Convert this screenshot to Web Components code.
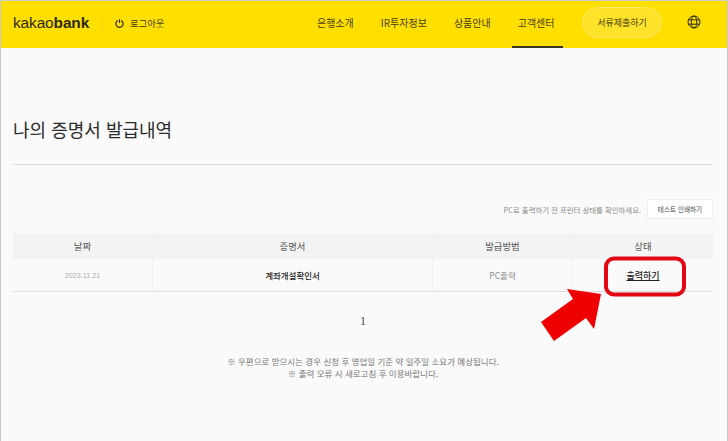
<!DOCTYPE html>
<html lang="ko">
<head>
<meta charset="utf-8">
<title>kakaobank</title>
<style>
    html, body { margin: 0; height: 100%; background: #fafafa; }
    body { font-family: "Noto Sans CJK KR", "Noto Sans", sans-serif; overflow: hidden; }
</style>
</head>
<body>
<cert-page>
    <site-header></site-header>
    <cert-history></cert-history>
</cert-page>
<script>
class CertPage extends HTMLElement {
    constructor() {
        super();
        this.shadowDOM = this.attachShadow({mode: "open"});
        this.shadowDOM.innerHTML = `
        <style>
            :host {
                display: block;
                position: relative;
                box-sizing: border-box;
                width: 728px;
                height: 441px;
                overflow: hidden;
                background: #fafafa;
                border: 1px solid #c9c9c9;
                border-bottom: 0;
            }
        </style>
        <slot></slot>`;
    }
}

class SiteHeader extends HTMLElement {
    constructor() {
        super();
        this.shadowDOM = this.attachShadow({mode: "open"});
        this.shadowDOM.innerHTML = `
        <style>
            :host {
                display: flex;
                align-items: center;
                box-sizing: border-box;
                height: 47px;
                padding: 0 26px 0 12px;
                background: #ffdf00;
                color: #4a4118;
                font-size: 10px;
            }
            .logo {
                font: 400 15.4px "Liberation Sans", sans-serif;
                letter-spacing: -.1px;
                color: #2e2a12;
                padding-bottom: 3px;
            }
            .logo b { font-weight: 700; }
            .sep {
                width: 1px;
                height: 12px;
                margin: 0 12px 0 13px;
                background: #ecd008;
            }
            .logout {
                display: flex;
                align-items: center;
                gap: 6px;
                padding-bottom: 3px;
                font-size: 9.3px;
            }
            nav {
                display: flex;
                align-items: center;
                margin-left: auto;
                height: 100%;
            }
            nav a {
                position: relative;
                display: flex;
                align-items: center;
                height: 100%;
                padding-bottom: 5px;
                box-sizing: border-box;
                margin-right: 27px;
            }
            nav a.on { margin-right: 27.5px; }
            nav a.on::after {
                content: "";
                position: absolute;
                left: -6px;
                right: -8px;
                bottom: 0;
                height: 2px;
                background: #3a3520;
            }
            .submit {
                display: flex;
                align-items: center;
                justify-content: center;
                box-sizing: border-box;
                width: 80px;
                height: 31px;
                margin: 0 25px 5px 0;
                border: 1px solid #ffe75a;
                border-radius: 16px;
                background: #ffe22a;
                font-size: 9px;
            }
            svg { display: block; }
            .globe { margin-bottom: 5px; }
        </style>
        <span class="logo">kakao<b>bank</b></span>
        <span class="sep"></span>
        <span class="logout">
            <svg width="9" height="9" viewBox="0 0 10 10" fill="none" stroke="#2e2a12" stroke-width="1.3">
                <path d="M3 1.8a4 4 0 1 0 4 0"/>
                <path d="M5 .3v4.2"/>
            </svg>
            로그아웃
        </span>
        <nav>
            <a>은행소개</a>
            <a>IR투자정보</a>
            <a>상품안내</a>
            <a class="on">고객센터</a>
            <span class="submit">서류제출하기</span>
            <svg class="globe" width="14" height="14" viewBox="0 0 14 14" fill="none" stroke="#2e2a12" stroke-width="1">
                <circle cx="7" cy="7" r="6"/>
                <ellipse cx="7" cy="7" rx="2.8" ry="6"/>
                <path d="M1.5 4.8h11M1.5 9.2h11"/>
            </svg>
        </nav>`;
    }
}

class CertHistory extends HTMLElement {
    constructor() {
        super();
        this.shadowDOM = this.attachShadow({mode: "open"});
        this.shadowDOM.innerHTML = `
        <style>
            :host {
                display: block;
                padding: 0 14px 0 12px;
                color: #333;
            }
            h1 {
                margin: 0;
                padding: 66px 0 20px;
                font-size: 18px;
                line-height: 30px;
                font-weight: 400;
                color: #2b2b2b;
                border-bottom: 1px solid #dcdcdc;
            }
            .tools {
                display: flex;
                align-items: center;
                justify-content: flex-end;
                gap: 6px;
                height: 20px;
                margin: 34px 0 14px;
                font-size: 7.4px;
                color: #8a8a8a;
            }
            .tools button {
                width: 66px;
                height: 20px;
                padding: 0;
                border: 1px solid #eee;
                background: #fff;
                font: 6.6px "Noto Sans CJK KR", sans-serif;
                color: #444;
            }
            .grid {
                display: grid;
                grid-template-columns: 139px 280px 140px 141px;
                font-size: 8.5px;
                text-align: center;
                border-bottom: 1px solid #ddd;
            }
            .grid > div {
                display: flex;
                align-items: center;
                justify-content: center;
                box-sizing: border-box;
                border-left: 1px solid #f0f0f0;
            }
            .grid > div:nth-child(4n+1) { border-left: 0; }
            .th {
                height: 26px;
                background: #f3f3f3;
                color: #555;
                font-size: 9.4px;
            }
            .td { height: 32px; color: #8c8c8c; }
            .td.date { font-family: "Liberation Sans", sans-serif; color: #aaa; font-size: 7.2px; }
            .td.name { color: #222; font-weight: 500; }
            .td.print { color: #222; font-size: 9px; font-weight: 500; text-decoration: underline; }
            .pager {
                margin-top: 21px;
                text-align: center;
                font: 12px/16px "Liberation Serif", serif;
                color: #3f4a44;
            }
            .note {
                margin: 26px 0 0;
                text-align: center;
                font-size: 8.5px;
                line-height: 12px;
                color: #777;
            }
        </style>
        <h1>나의 증명서 발급내역</h1>
        <div class="tools">
            <span>PC로 출력하기 전 프린터 상태를 확인하세요.</span>
            <button>테스트 인쇄하기</button>
        </div>
        <div class="grid">
            <div class="th">날짜</div>
            <div class="th">증명서</div>
            <div class="th">발급방법</div>
            <div class="th">상태</div>
            <div class="td date">2023.11.21</div>
            <div class="td name">계좌개설확인서</div>
            <div class="td">PC출력</div>
            <div class="td print">출력하기</div>
        </div>
        <div class="pager">1</div>
        <p class="note">※ 우편으로 받으시는 경우 신청 후 영업일 기준 약 일주일 소요가 예상됩니다.<br>※ 출력 오류 시 새로고침 후 이용바랍니다.</p>`;
    }
}

class RedCallout extends HTMLElement {
    constructor() {
        super();
        this.shadowDOM = this.attachShadow({mode: "open"});
        this.shadowDOM.innerHTML = `
        <style>
            :host {
                position: absolute;
                left: -1px;
                top: -1px;
                width: 728px;
                height: 441px;
                pointer-events: none;
            }
        </style>
        <svg width="728" height="441" viewBox="0 0 728 441">
            <rect x="606" y="258.5" width="78" height="36" rx="8" fill="none" stroke="#e30613" stroke-width="4"/>
            <polygon points="601,294 594,329 586,318 554,341 541,322 573,299 567,289" fill="#ee0000"/>
        </svg>`;
    }
}

customElements.define("cert-page", CertPage);
customElements.define("site-header", SiteHeader);
customElements.define("cert-history", CertHistory);
customElements.define("red-callout", RedCallout);

document.querySelector("cert-page").appendChild(document.createElement("red-callout"));
</script>
</body>
</html>
